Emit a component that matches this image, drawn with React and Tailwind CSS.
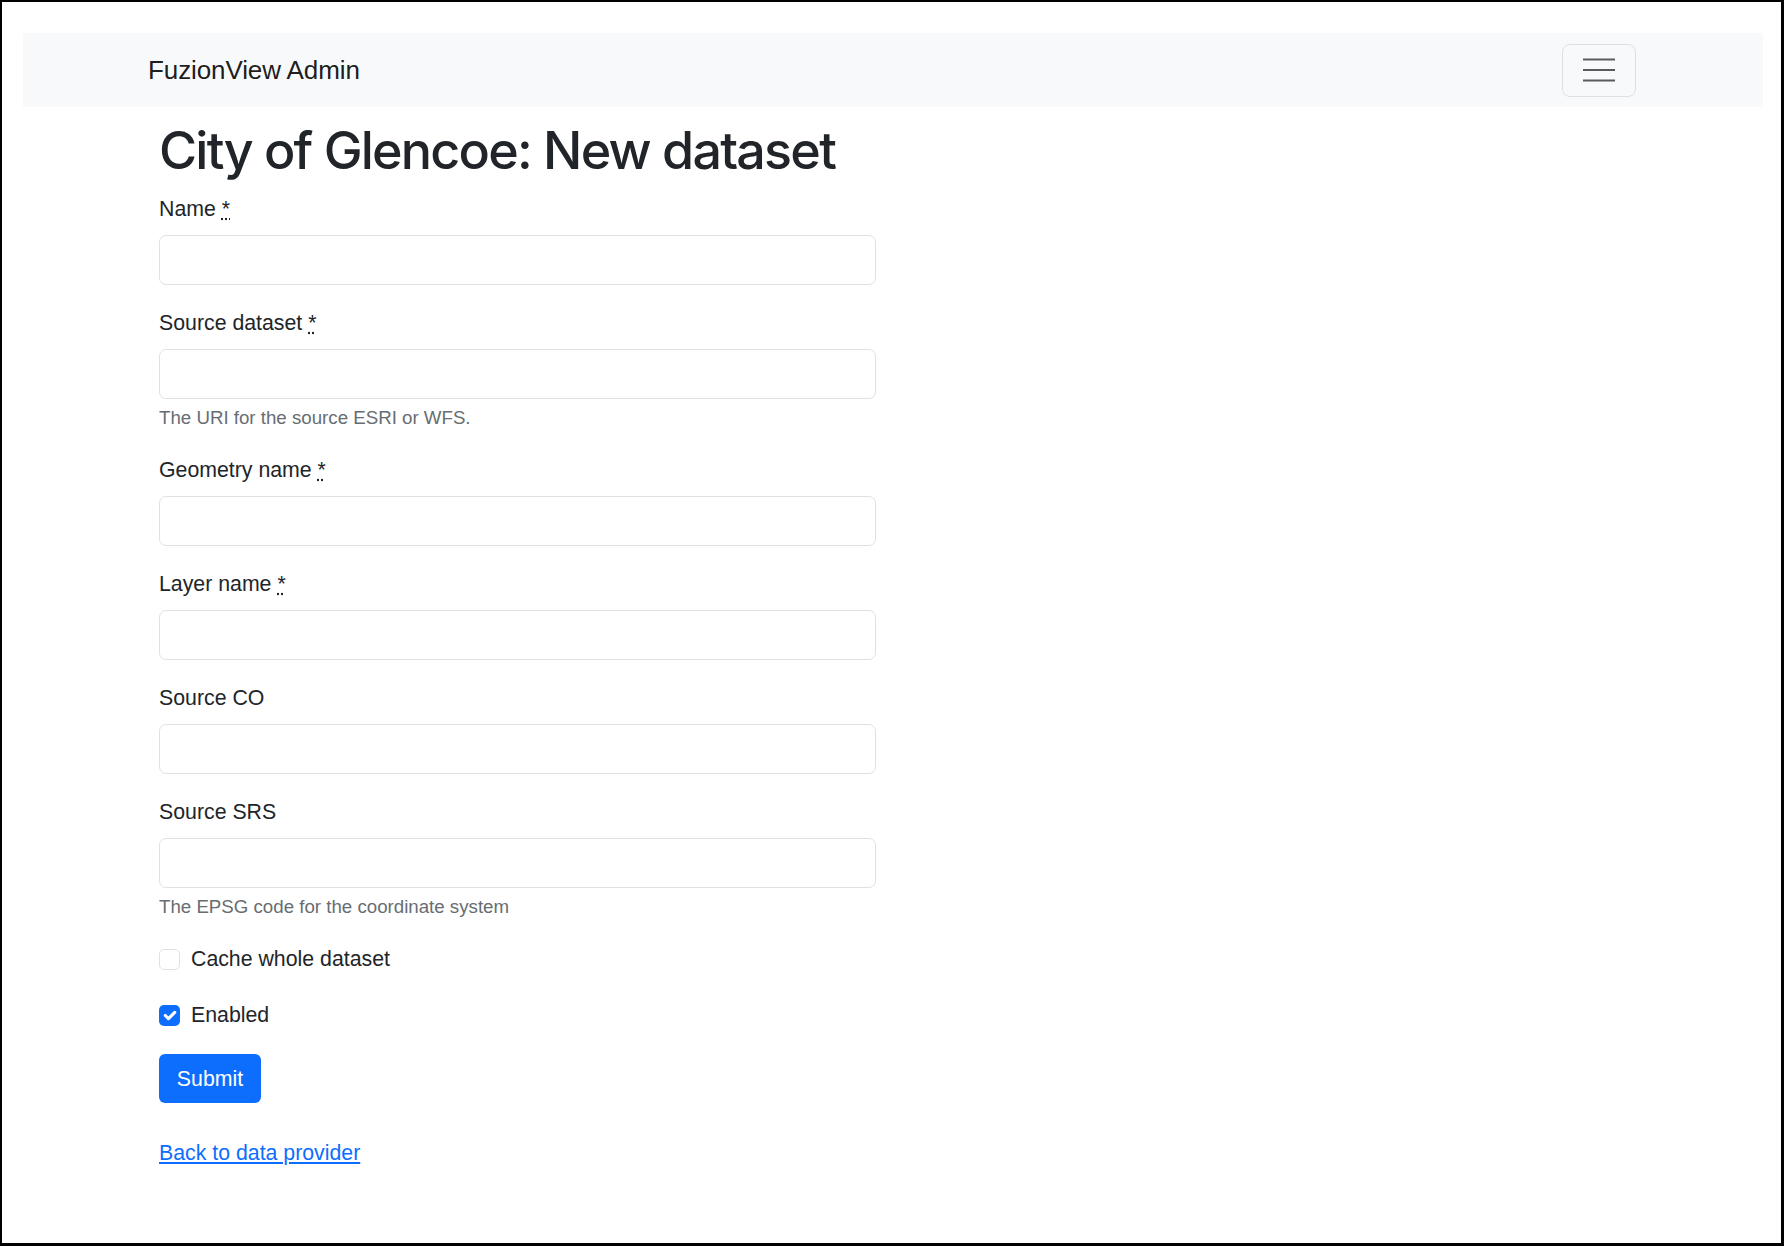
import { useState } from "react";

const body = { fontFamily: '"Liberation Sans", Arial, sans-serif' };

function Field({ label, required, help }) {
  return (
    <div className="mb-[22px]">
      <label className="block text-[21.3px] leading-[32px] mb-[10px] text-[#212529]">
        {label}
        {required && (
          <>
            {" "}
            <abbr title="required" className="underline decoration-dotted">
              *
            </abbr>
          </>
        )}
      </label>
      <input
        type="text"
        className="block w-[717px] h-[50px] rounded-[7px] border border-[#dee2e6] bg-white px-4 text-[21.3px] outline-none"
      />
      {help && (
        <div className="mt-[5px] text-[18.7px] leading-[28px] text-[#676d72]">{help}</div>
      )}
    </div>
  );
}

function Check({ label, checked, onToggle, className }) {
  return (
    <label className={`flex items-center h-[32px] cursor-pointer ${className}`} onClick={onToggle}>
      {checked ? (
        <span className="w-[21px] h-[21px] rounded-[5px] bg-[#0d6efd] flex items-center justify-center">
          <svg width="21" height="21" viewBox="0 0 20 20">
            <path d="m6 10 3 3 6-6" fill="none" stroke="#fff" strokeWidth="3" strokeLinecap="round" strokeLinejoin="round" />
          </svg>
        </span>
      ) : (
        <span className="w-[21px] h-[21px] rounded-[5px] border border-[#dee2e6] bg-white" />
      )}
      <span className="ml-[11px] text-[21.3px] leading-[32px] text-[#212529]">{label}</span>
    </label>
  );
}

export default function App() {
  const [cache, setCache] = useState(false);
  const [enabled, setEnabled] = useState(true);

  return (
    <div
      style={body}
      className="w-full h-[1246px] bg-white border-t-2 border-l-2 border-r-[3px] border-b-[3px] border-black pt-[31px] pl-[21px] pr-[18px]"
    >
      {/* Navbar */}
      <nav className="h-[74px] bg-[#f8f9fa] flex items-center justify-between pl-[125px] pr-[127px]">
        <span className="text-[26px] tracking-[-0.004em] text-[#000000e6] leading-[40px]">FuzionView Admin</span>
        <button className="w-[74px] h-[53px] rounded-[8px] border border-[#0000001a] flex items-center justify-center">
          <svg width="32" height="24" viewBox="0 0 32 24">
            <path d="M0 1.5h32M0 12h32M0 22.5h32" stroke="#595c5f" strokeWidth="2.2" />
          </svg>
        </button>
      </nav>

      {/* Page */}
      <main className="pl-[136px]">
        <h1
          className="mt-[12px] mb-[10px] text-[52px] leading-[64px] font-medium text-[#212529] tracking-[-0.034em]"
          style={{ fontFamily: "Inter, sans-serif" }}
        >
          City of Glencoe: New dataset
        </h1>

        <form onSubmit={(e) => e.preventDefault()}>
          <Field label="Name" required />
          <Field label="Source dataset" required help="The URI for the source ESRI or WFS." />
          <Field label="Geometry name" required />
          <Field label="Layer name" required />
          <Field label="Source CO" />
          <Field label="Source SRS" help="The EPSG code for the coordinate system" />

          <Check label="Cache whole dataset" checked={cache} onToggle={() => setCache(!cache)} className="mb-[24px]" />
          <Check label="Enabled" checked={enabled} onToggle={() => setEnabled(!enabled)} className="mb-[23px]" />

          <button
            type="submit"
            className="w-[102px] h-[49px] rounded-[6px] bg-[#0d6efd] text-white text-[21.3px] leading-[32px]"
          >
            Submit
          </button>
        </form>

        <p className="mt-[34px]">
          <a href="#" className="text-[21.3px] leading-[32px] text-[#0d6efd] underline">
            Back to data provider
          </a>
        </p>
      </main>
    </div>
  );
}
